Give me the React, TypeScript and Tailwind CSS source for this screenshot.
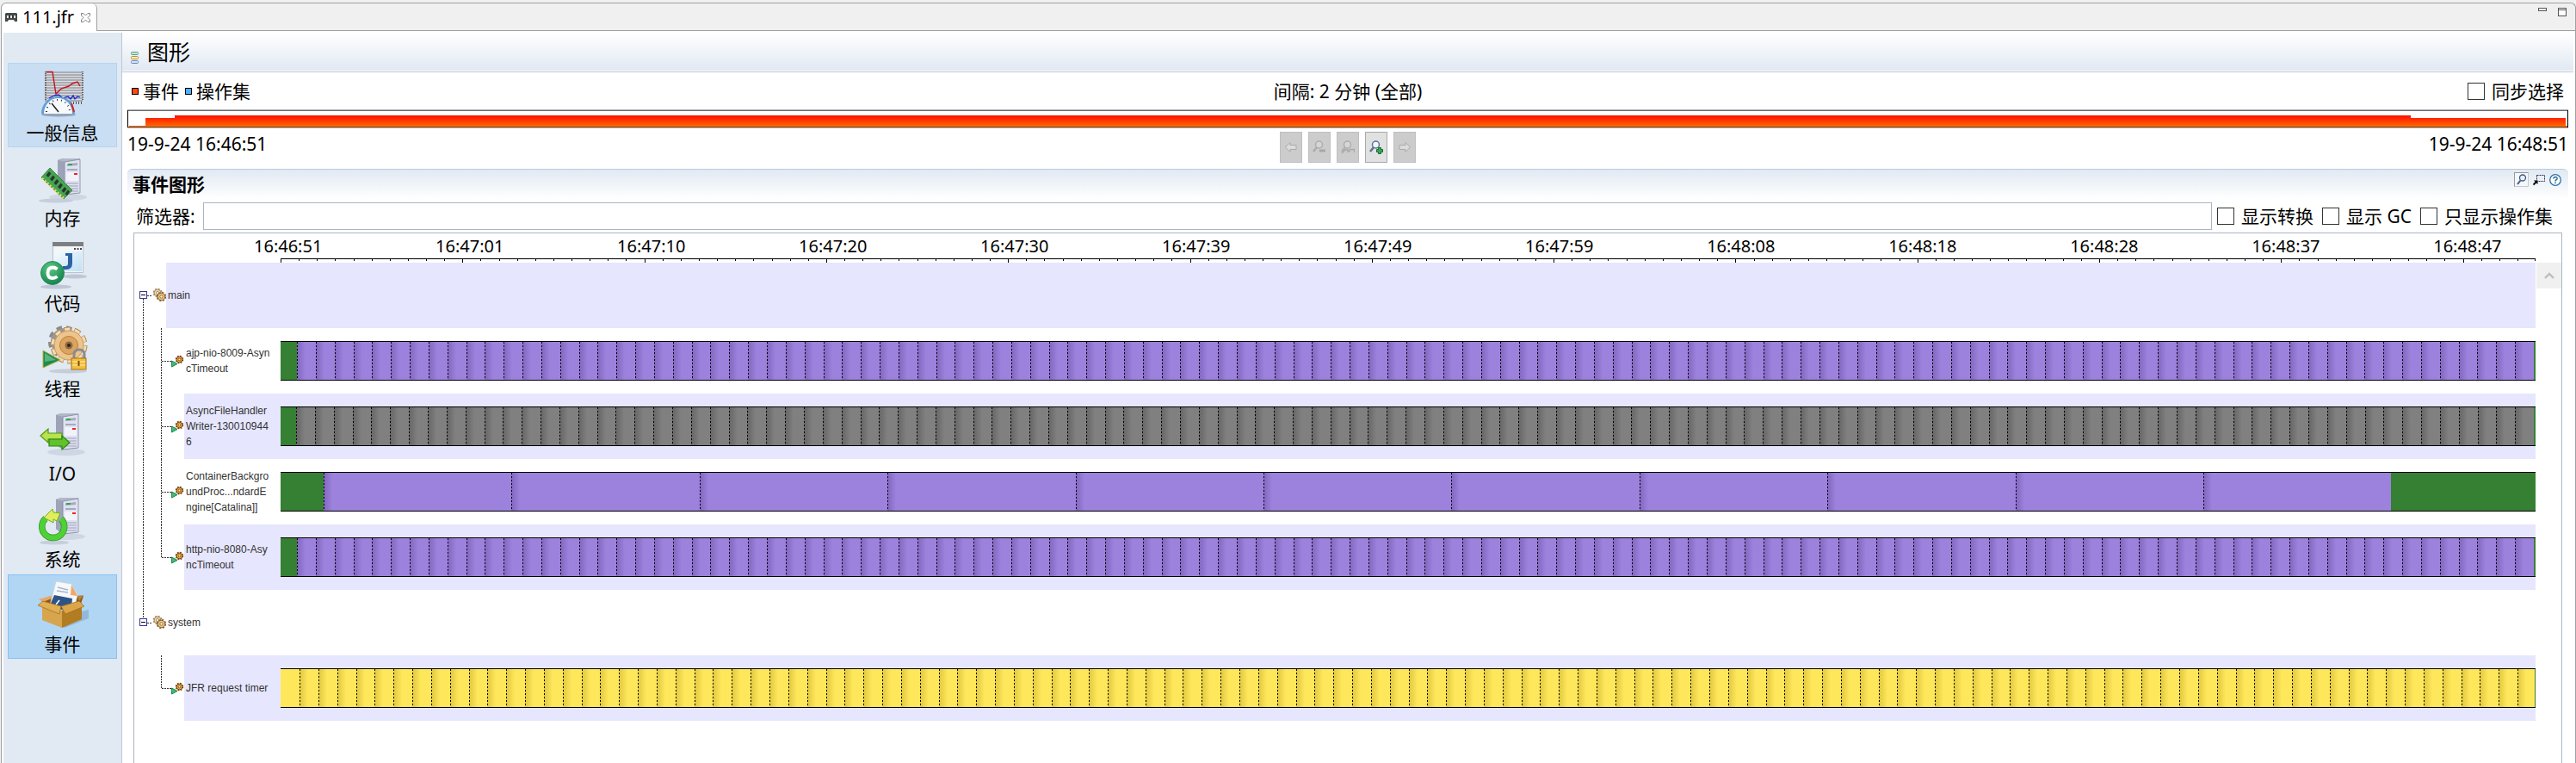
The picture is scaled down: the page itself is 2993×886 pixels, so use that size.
import React from "react";

const TEXT = "font-['Noto_Sans','Noto_Sans_CJK_SC',sans-serif]";

/* ---------- sidebar icons (60 x 60) ---------- */

function Server() {
  return (
    <g>
      <ellipse cx="36" cy="50" rx="22" ry="4" fill="#c3cad8" opacity="0.6" />
      <path d="M24 7 L30 5 H50 V45 L32 47 L24 41 Z" fill="#8b8f9c" />
      <path d="M24 7 L32 9 V47 L24 41 Z" fill="#9fa3b8" />
      <path d="M24 7 L30 5 H50 L49 7 L32 9 Z" fill="#b4b7c9" />
      <path d="M32 9 L50 6 V45 L32 47 Z" fill="#dfe1f0" stroke="#8087a0" strokeWidth="0.8" />
      <path d="M35 11.500 L47 10 V13 L35 14 Z M35 17 H47 V19 H35 Z" fill="#a3aac0" />
      <rect x="36" y="11" width="5" height="2" fill="#2fae3a" />
      <rect x="34" y="21" width="14" height="10" fill="#f1f2fa" />
      <rect x="43" y="22" width="4" height="2" fill="#e22" />
      <path d="M34 34 H48 M34 37 H48 M34 40 H48 M34 43 H48" stroke="#9ba2ba" strokeWidth="1.200" />
    </g>
  );
}

function GeneralIcon() {
  return (
    <svg width="60" height="60" viewBox="0 0 60 60" aria-hidden="true">
      <rect x="9" y="3" width="44" height="34" fill="#dcdee2" />
      <path
        d="M9 4H53 M9 7H53 M9 10H53 M9 13H53 M9 16H53 M9 19H53 M9 22H53 M9 25H53 M9 28H53 M9 31H53 M9 34H53 M9 37H53"
        stroke="#777b84"
        strokeWidth="1.200"
      />
      <path d="M10 3V37 M53 3V37" stroke="#666" strokeWidth="2" strokeDasharray="1 1" />
      <path d="M36 39.500H53" stroke="#555" strokeWidth="3" strokeDasharray="1 2" />
      <path d="M11 3.500H18L21 23L22 29L28 23L37 20L41 17L47 15L50 20" fill="none" stroke="#c4121c" strokeWidth="1.400" />
      <path d="M14 34L20 31L25 30L30 34L36 32L39 35L42 31L44 35L47 32L50 33" fill="none" stroke="#1b22c8" strokeWidth="1.300" />
      <ellipse cx="25" cy="53" rx="20" ry="2.500" fill="#6f7f99" opacity="0.6" />
      <path d="M5 52A19.500 20 0 0 1 44 52Z" fill="#5f9fdd" />
      <path d="M8 52A16.500 18 0 0 1 41 52Z" fill="#f7fafc" />
      <path d="M40 40L43 50" stroke="#d22" strokeWidth="2" />
      <path d="M11 50A13.500 14 0 0 1 38 50" fill="none" stroke="#333" strokeWidth="2" strokeDasharray="1 4" />
      <path d="M17 40L25 50" stroke="#222" strokeWidth="1.500" />
    </svg>
  );
}

function MemoryIcon() {
  return (
    <svg width="60" height="60" viewBox="0 0 60 60" aria-hidden="true">
      <ellipse cx="22" cy="54" rx="20" ry="2.500" fill="#bfc7d6" opacity="0.8" />
      <Server />
      <path d="M15 16L41 42L31 52L5 27Z" fill="#46a552" stroke="#2b7a3c" strokeWidth="0.800" />
      <path d="M6 28L31 51" stroke="#ecdc5c" strokeWidth="2.500" strokeDasharray="2 2" />
      <g fill="#28382e">
        <path d="M14 20L16.500 22.500L13 27L10.500 24.500Z" />
        <path d="M18.500 24.500L21 27L17.500 31.500L15 29Z" />
        <path d="M23 29L25.500 31.500L22 36L19.500 33.500Z" />
        <path d="M27.500 33.500L30 36L26.500 40.500L24 38Z" />
        <path d="M32 38L34.500 40.500L31 45L28.500 42.500Z" />
        <path d="M36 41.500L38 43.500L35 48L32.500 46Z" />
      </g>
    </svg>
  );
}

function CodeIcon() {
  return (
    <svg width="60" height="60" viewBox="0 0 60 60" aria-hidden="true">
      <defs>
        <radialGradient id="codeBall" cx="0.4" cy="0.3" r="0.8">
          <stop offset="0" stopColor="#5cc98a" />
          <stop offset="1" stopColor="#0d7a43" />
        </radialGradient>
        <linearGradient id="codeWin" x1="0" y1="0" x2="1" y2="1">
          <stop offset="0" stopColor="#f4fbff" />
          <stop offset="1" stopColor="#bfe0f5" />
        </linearGradient>
      </defs>
      <ellipse cx="22" cy="55" rx="18" ry="2.500" fill="#bfc7d6" />
      <ellipse cx="44" cy="43" rx="14" ry="2.500" fill="#bfc7d6" />
      <rect x="18" y="3" width="36" height="36" fill="#b9c3cf" />
      <rect x="19" y="7" width="34" height="31" fill="#f4f6f8" />
      <rect x="18" y="3" width="36" height="5" fill="#7d7f82" />
      <path d="M43 11H52" stroke="#445" strokeWidth="2" strokeDasharray="2 1.500" />
      <rect x="20" y="14" width="32" height="23" fill="url(#codeWin)" />
      <path d="M33 16H41V28Q41 35 34 35H30V31H33Q36 31 36 28V19H33Z" fill="#2c63a5" />
      <circle cx="18" cy="39" r="13.500" fill="url(#codeBall)" stroke="#2a8c58" />
      <path d="M23.500 34.500Q21 32.500 18 32.500Q12.500 33 12.500 39Q12.500 45 18 45Q21 45 23.500 43" fill="none" stroke="#fff" strokeWidth="3.800" />
    </svg>
  );
}

function ThreadIcon() {
  return (
    <svg width="60" height="60" viewBox="0 0 60 60" aria-hidden="true">
      <ellipse cx="36" cy="54" rx="22" ry="2.500" fill="#c6ccd8" />
      <circle cx="32" cy="20" r="16" fill="none" stroke="#8c8a88" strokeWidth="6" strokeDasharray="6 5" />
      <circle cx="32" cy="20" r="16" fill="#9a9897" />
      <circle cx="37" cy="24" r="18" fill="none" stroke="#b98a4b" strokeWidth="7" strokeDasharray="7 4.310" />
      <circle cx="37" cy="24" r="18" fill="none" stroke="#f0dcb8" strokeWidth="5" strokeDasharray="6 5.310" strokeDashoffset="-0.500" />
      <circle cx="37" cy="24" r="17" fill="#ecc48c" stroke="#c8965a" />
      <circle cx="37" cy="24" r="10.500" fill="#dba55f" stroke="#b9803c" />
      <circle cx="37" cy="24" r="4.500" fill="#8d6a44" />
      <circle cx="37" cy="24" r="2" fill="#2e2318" />
      <path d="M7 30L27 41L7 50Z" fill="#1f8b4c" stroke="#b7b23d" strokeWidth="1" />
      <path d="M9 33L22 41L9 43Z" fill="#57b57f" />
      <path d="M43 40V35Q43 29 49 29Q55 29 55 35V40" fill="none" stroke="#888c90" strokeWidth="3" />
      <rect x="40" y="39" width="17" height="13" fill="#f3bd3f" stroke="#a97412" />
      <path d="M41 43H56 M41 47H56" stroke="#fbe08a" strokeWidth="1.500" />
      <path d="M48.500 42V48" stroke="#7a5008" strokeWidth="2" />
    </svg>
  );
}

function IoIcon() {
  return (
    <svg width="60" height="60" viewBox="0 0 60 60" aria-hidden="true">
      <g transform="translate(-2 -1)">
        <Server />
      </g>
      <path d="M4 30L13 22V27H29V34H13V38Z" fill="#b9e24c" stroke="#4d9a1b" strokeWidth="1.200" />
      <path d="M38 38L29 30V34H14V42H29V46Z" fill="#61c32b" stroke="#2f8415" strokeWidth="1.200" />
    </svg>
  );
}

function SystemIcon() {
  return (
    <svg width="60" height="60" viewBox="0 0 60 60" aria-hidden="true">
      <ellipse cx="20" cy="55" rx="17" ry="2.500" fill="#bfc7d6" opacity="0.8" />
      <g transform="translate(-2 -2)">
        <Server />
      </g>
      <g transform="translate(-1 3)">
        <path d="M29 24.500A13 13 0 1 1 11 24" fill="none" stroke="#2b9a22" strokeWidth="7.500" />
        <path d="M29 24.500A13 13 0 1 1 11 24" fill="none" stroke="#4fd037" strokeWidth="6" />
        <path d="M9 23L19 13L20 17L28 18L24 27L20 25L20 29Z" fill="#e0ee5c" stroke="#6fae1d" strokeWidth="1" />
      </g>
    </svg>
  );
}

function EventIcon() {
  return (
    <svg width="60" height="60" viewBox="0 0 60 60" aria-hidden="true">
      <path d="M12 46L32 55L60 44V34Z" fill="#7fa3c6" opacity="0.6" />
      <path d="M5 23L22 17L54 18L50 30L30 34L8 29Z" fill="#8a5a1c" />
      <path d="M2 22L19 17L22 19L7 25Z" fill="#e6a765" />
      <path d="M22 1L40 4L47 17L44 30L29 34L15 29Z" fill="#f5f8fc" stroke="#c9d0da" strokeWidth="0.800" />
      <path d="M40 5L47 18L39 17Z" fill="#f2a766" />
      <path d="M24 8L36 11 M23 12L36 14" stroke="#a9b6c8" strokeWidth="1.500" />
      <path d="M20 17L41 21L40 31L29 34L15 29Z" fill="#2d5487" />
      <path d="M22 28L26 23" stroke="#fff" strokeWidth="1.500" />
      <path d="M6 30L29 35V55L6 46Z" fill="#d6a54d" />
      <path d="M29 35L52 29V45L29 55Z" fill="#b27c23" />
      <path d="M1 29L7 24L28 30L26 39Z" fill="#e2ae52" stroke="#a06c1b" strokeWidth="0.700" />
      <path d="M28 30L49 24L55 30L33 39Z" fill="#dca648" stroke="#a06c1b" strokeWidth="0.700" />
      <path d="M49 24L54 17L47 18Z" fill="#b98530" />
    </svg>
  );
}

const NAV = [
  { label: "一般信息", Icon: GeneralIcon, look: "bg-[#c9def2] border-[#b3d5f3]" },
  { label: "内存", Icon: MemoryIcon, look: "border-transparent" },
  { label: "代码", Icon: CodeIcon, look: "border-transparent" },
  { label: "线程", Icon: ThreadIcon, look: "border-transparent" },
  { label: "I/O", Icon: IoIcon, look: "border-transparent" },
  { label: "系统", Icon: SystemIcon, look: "border-transparent" },
  { label: "事件", Icon: EventIcon, look: "bg-[#b1d6f4] border-[#86c1f3]" },
];

/* ---------- small parts ---------- */

function Check({ id, label }: { id: string; label: string }) {
  return (
    <div className="flex items-center gap-2">
      <input
        id={id}
        type="checkbox"
        className="size-5 shrink-0 appearance-none border border-[#333] bg-white checked:bg-[#0078d7]"
      />
      <label htmlFor={id} className="whitespace-nowrap">
        {label}
      </label>
    </div>
  );
}

function Magnifier({ color, lens }: { color: string; lens: string }) {
  return (
    <g>
      <circle cx="7.500" cy="5" r="4" fill={lens} stroke={color} strokeWidth="1.500" />
      <path d="M5 8L1 13" stroke={color} strokeWidth="2.500" />
    </g>
  );
}

const NAV_BUTTONS = [
  {
    name: "后退",
    disabled: true,
    art: <path d="M1.500 8L7 2.500V5.500H14V10.500H7V13.500Z" fill="#dcdcdc" stroke="#aaa" />,
  },
  {
    name: "缩小",
    disabled: true,
    art: (
      <>
        <Magnifier color="#adadad" lens="#d6d6d6" />
        <rect x="8" y="10.500" width="7" height="3" fill="#a8a8a8" />
      </>
    ),
  },
  {
    name: "缩放至选区",
    disabled: true,
    art: (
      <>
        <Magnifier color="#adadad" lens="#d6d6d6" />
        <path d="M1 15L5 11H8V13H10V10.500H15.500V14" fill="none" stroke="#a8a8a8" strokeWidth="1.300" />
      </>
    ),
  },
  {
    name: "放大",
    disabled: false,
    art: (
      <>
        <Magnifier color="#5b7396" lens="#f2f7fd" />
        <path d="M10.500 8.500H13.500V10.500H15.500V13.500H13.500V15.500H10.500V13.500H8.500V10.500H10.500Z" fill="#3aa655" stroke="#156b2c" />
      </>
    ),
  },
  {
    name: "前进",
    disabled: true,
    art: <path d="M14.500 8L9 2.500V5.500H2V10.500H9V13.500Z" fill="#dcdcdc" stroke="#aaa" />,
  },
];

/* ---------- timeline ---------- */

const SPAN = 2620;
const PALETTE = {
  purple: { base: "#9c82dc", dark: "#8166bf" },
  gray: { base: "#808080", dark: "#656565" },
  yellow: { base: "#ffe75c", dark: "#e0c73e" },
};

type Track = {
  tone: keyof typeof PALETTE;
  from: number;
  to: number;
  step: number;
  count: number;
  lead?: boolean;
};

const ASYNC: Track = { tone: "purple", from: 19, to: 2618, step: 21.84, count: 119, lead: true };
const LOGGER: Track = { tone: "gray", from: 18, to: 2618, step: 21.85, count: 119, lead: true };
const CONTAINER: Track = { tone: "purple", from: 50, to: 2452, step: 218.4, count: 11, lead: true };
const JFR: Track = { tone: "yellow", from: 22, to: 2619, step: 21.84, count: 119 };

function Bar({ id, track }: { id: string; track: Track }) {
  const { base, dark } = PALETTE[track.tone];
  const marks = Array.from({ length: track.count }, (_, i) => Math.round(track.from + i * track.step));
  const start = track.lead ? track.from : 0;
  return (
    <svg
      className="h-[46px] w-full"
      viewBox={`0 0 ${SPAN} 46`}
      preserveAspectRatio="none"
      shapeRendering="crispEdges"
      aria-hidden="true"
    >
      <defs>
        <linearGradient id={id}>
          <stop offset="0" stopColor={dark} />
          <stop offset="1" stopColor={base} />
        </linearGradient>
      </defs>
      <rect width={SPAN} height="46" fill="#358033" />
      <rect x={start} width={track.to - start} height="46" fill={base} />
      {marks.map((x) => (
        <g key={x}>
          <rect x={x} width="10" height="46" fill={`url(#${id})`} />
          <path d={`M${x + 0.5} 1V45`} stroke="#000" strokeWidth="1" strokeDasharray="2 2" />
        </g>
      ))}
      <path d={`M0 0.500H${SPAN} M0 45.500H${SPAN}`} stroke="#000" />
    </svg>
  );
}

function Cog({ x, y, r, fill, edge }: { x: number; y: number; r: number; fill: string; edge: string }) {
  return (
    <g>
      <circle cx={x} cy={y} r={r} fill="none" stroke={edge} strokeWidth="2.400" strokeDasharray={`${r * 0.45} ${r * 0.335}`} />
      <circle cx={x} cy={y} r={r - 0.3} fill={fill} stroke={edge} strokeWidth="1" />
      <circle cx={x} cy={y} r={r * 0.38} fill="#fff3cf" stroke={edge} strokeWidth="0.900" />
    </g>
  );
}

function GroupRow({ name, last, shade }: { name: string; last?: boolean; shade: string }) {
  return (
    <div className="flex h-[76px]">
      <button type="button" aria-label={name} className="block w-[37px] shrink-0">
        <svg width="37" height="76" viewBox="0 0 37 76" className="block">
          <path d={last ? "M10.500 0V33" : "M10.500 42V76"} stroke="#333" strokeDasharray="2 1" />
          <path d="M15 38.500H21" stroke="#333" strokeDasharray="2 1" />
          <rect x="6.500" y="33.500" width="8" height="8" fill="#fff" stroke="#35359a" />
          <path d="M8 37.500H13" stroke="#000" />
          <Cog x={27} y={35} r={4.2} fill="#ead9b0" edge="#a88a68" />
          <Cog x={31.500} y={39.500} r={4.5} fill="#eccb7c" edge="#8a5f3a" />
        </svg>
      </button>
      <div className={`flex flex-1 items-center pl-[2px] ${shade}`}>{name}</div>
    </div>
  );
}

function ThreadRow({
  id,
  lines,
  track,
  shade,
  outer,
  last,
}: {
  id: string;
  lines: string[];
  track: Track;
  shade: string;
  outer?: boolean;
  last?: boolean;
}) {
  return (
    <div className="flex h-[76px]">
      <svg width="58" height="76" viewBox="0 0 58 76" className="block shrink-0" aria-hidden="true">
        {outer && <path d="M10.500 0V76" stroke="#333" strokeDasharray="2 1" />}
        <path d={last ? "M31.500 0V38" : "M31.500 0V76"} stroke="#333" strokeDasharray="2 1" />
        <path d="M32 38.500H43" stroke="#333" strokeDasharray="2 1" />
        <path d="M43.500 38L50 41.500L43.500 45Z" fill="#45b878" stroke="#1d8a4c" />
        <Cog x={52.500} y={36.500} r={3.6} fill="#f4b63c" edge="#7a4413" />
      </svg>
      <div className={`flex min-w-0 flex-1 items-center ${shade}`}>
        <div className="w-[112px] shrink-0 pl-[2px]">
          {lines.map((line) => (
            <div key={line} className="whitespace-nowrap">
              {line}
            </div>
          ))}
        </div>
        <div className="flex min-w-0 flex-1">
          <Bar id={id} track={track} />
        </div>
      </div>
    </div>
  );
}

const TIMES = [
  "16:46:51",
  "16:47:01",
  "16:47:10",
  "16:47:20",
  "16:47:30",
  "16:47:39",
  "16:47:49",
  "16:47:59",
  "16:48:08",
  "16:48:18",
  "16:48:28",
  "16:48:37",
  "16:48:47",
];

function Axis() {
  const ticks = Array.from({ length: 125 }, (_, i) => ({
    x: Math.min(Math.round(i * 21.13), SPAN - 1),
    long: i % 10 === 0,
  }));
  return (
    <div className="pr-[30px]">
      <div className="flex h-[29px] overflow-hidden pl-[139px] text-[20px] leading-[30px]">
        {TIMES.map((t) => (
          <div key={t} className="w-[7.96%] shrink-0 whitespace-nowrap">
            {t}
          </div>
        ))}
      </div>
      <div className="pl-[170px]">
        <svg
          className="block h-[5px] w-full"
          viewBox={`0 0 ${SPAN} 5`}
          preserveAspectRatio="none"
          shapeRendering="crispEdges"
          aria-hidden="true"
        >
          <path d={`M0 0.500H${SPAN}`} stroke="#000" />
          {ticks.map((t) => (
            <path key={t.x} d={`M${t.x + 0.5} 0V${t.long ? 5 : 3}`} stroke="#000" />
          ))}
        </svg>
      </div>
    </div>
  );
}

/* ---------- page ---------- */

export default function App() {
  return (
    <div className={`flex min-h-screen flex-col bg-[#f0f0f0] pt-[3px] text-[21px] leading-[28px] text-black ${TEXT}`}>
      <div className="ml-px flex flex-1 flex-col rounded-t-md border-x border-t border-[#a0a0a0]">
        <header className="flex h-[32px] shrink-0">
          <div className="flex w-[111px] items-center rounded-t-md border-r border-[#a0a0a0] bg-white pl-1 text-[20px]">
            <svg width="14" height="10" viewBox="0 0 14 10" aria-hidden="true">
              <path d="M1 0H13L14 1V10H11L10 8H4L3 10H0V1Z" fill="#444b4b" />
              <rect x="2" y="3" width="10" height="3" fill="#e8e8e8" />
              <path d="M4 3H6V6H4Z M8 3H10V6H8Z" fill="#333" />
            </svg>
            <span className="ml-[6px]">111.jfr</span>
            <button type="button" aria-label="关闭" className="ml-2">
              <svg width="11" height="11" viewBox="0 0 11 11" className="block">
                <path
                  d="M0.500 0.500H3L5.500 3L8 0.500H10.500V3L8 5.500L10.500 8V10.500H8L5.500 8L3 10.500H0.500V8L3 5.500L0.500 3Z"
                  fill="#fff"
                  stroke="#777"
                  strokeWidth="0.900"
                />
              </svg>
            </button>
          </div>
          <div className="flex flex-1 items-start justify-end gap-[13px] border-b border-[#a0a0a0] pt-[5px] pr-[10px]">
            <button type="button" aria-label="最小化" className="h-[4px] w-[10px] border border-[#555] bg-white" />
            <button type="button" aria-label="最大化" className="flex h-[10px] w-[10px] items-start border border-[#555] bg-white">
              <span className="block h-[2px] w-full border-b border-[#555]" />
            </button>
          </div>
        </header>

        <div className="flex flex-1 bg-white pt-[2px]">
          <nav className="ml-[2px] flex w-[138px] shrink-0 flex-col gap-px border-r border-[#b9c8dc] bg-[#e1e9f2] px-[5px] pt-[35px]">
            {NAV.map(({ label, Icon, look }) => (
              <button
                key={label}
                type="button"
                className={`flex h-[98px] w-full flex-col items-center border pt-[6px] ${look}`}
              >
                <Icon />
                <span className="leading-[28px]">{label}</span>
              </button>
            ))}
          </nav>

          <main className="flex min-w-0 flex-1 flex-col">
            <div className="mr-[2px] h-[46px] border-b border-[#b9c5db]">
              <div className="flex h-[44px] items-center bg-linear-to-b from-white to-[#e1e9f2] pl-[10px]">
                <svg width="9" height="14" viewBox="0 0 9 14" className="mt-[14px]" aria-hidden="true">
                  <rect x="0.500" y="0.500" width="8" height="3" rx="1" fill="#c5e6cf" stroke="#5b9c80" />
                  <rect x="0.500" y="5.500" width="8" height="3" rx="1" fill="#fbeec0" stroke="#b8902c" />
                  <rect x="0.500" y="10.500" width="8" height="3" rx="1" fill="#d3e2f7" stroke="#6d87b8" />
                </svg>
                <h1 className="ml-[10px] text-[25px] leading-[44px]">图形</h1>
              </div>
            </div>

            <div className="flex flex-1 flex-col pr-2 pl-[6px]">
              <div className="grid h-[43px] grid-cols-3 items-center pt-1 pb-1">
                <div className="flex items-center pl-[5px]">
                  <span className="size-2 border border-black bg-[#ff4a10]" />
                  <span className="ml-[5px]">事件</span>
                  <span className="ml-[7px] size-2 border border-black bg-[#4fb0ff]" />
                  <span className="ml-[5px]">操作集</span>
                </div>
                <div className="text-center">间隔: 2 分钟 (全部)</div>
                <div className="flex justify-end pr-[5px]">
                  <Check id="sync" label="同步选择" />
                </div>
              </div>

              <svg
                className="block h-[22px] w-full"
                viewBox="0 0 2836 22"
                preserveAspectRatio="none"
                shapeRendering="crispEdges"
                aria-hidden="true"
              >
                <defs>
                  <linearGradient id="load" gradientUnits="userSpaceOnUse" x1="0" y1="7" x2="0" y2="21">
                    <stop offset="0" stopColor="#ff0c00" />
                    <stop offset="1" stopColor="#ff7200" />
                  </linearGradient>
                </defs>
                <rect width="2836" height="22" fill="#fff" />
                <path d="M2 21V19H21V10H55V7H2653V10H2833V19H2835V21Z" fill="url(#load)" />
                <path d="M0 0.500H2836 M0 21.500H2836" stroke="#a9afb5" />
                <path d="M0 1.500H2836" stroke="#6b6b6b" />
                <path d="M0 20.500H2836" stroke="#8a4a10" />
                <path d="M0.500 1V21 M2835.500 1V21" stroke="#000" />
              </svg>

              <div className="flex h-[47px] items-start justify-between pt-1">
                <div className="flex-1">19-9-24 16:46:51</div>
                <div className="flex gap-[7px]">
                  {NAV_BUTTONS.map((b) => (
                    <button
                      key={b.name}
                      type="button"
                      aria-label={b.name}
                      disabled={b.disabled}
                      className="flex h-[36px] w-[26px] items-center justify-center border border-[#a9a9a9] bg-[#e1e1e1] disabled:border-[#bfbfbf] disabled:bg-[#cccccc]"
                    >
                      <svg width="16" height="16" viewBox="0 0 16 16">
                        {b.art}
                      </svg>
                    </button>
                  ))}
                </div>
                <div className="flex-1 text-right">19-9-24 16:48:51</div>
              </div>

              <section className="flex flex-1 flex-col">
                <div className="flex h-[35px] items-start justify-between rounded-t-md border-t border-[#b9cbdf] bg-linear-to-b from-[#e1e9f2] to-white pr-2 pl-[6px]">
                  <h2 className="font-bold leading-[34px]">事件图形</h2>
                  <div className="flex items-center gap-[5px] pt-[3px]">
                    <button
                      type="button"
                      aria-label="缩放"
                      className="size-[17px] border border-[#c8c8c8] border-t-[#999] border-l-[#999] bg-[#f6f7f9]"
                    >
                      <svg width="15" height="15" viewBox="0 0 15 15" className="block">
                        <circle cx="9" cy="5.500" r="3.500" fill="#e6effa" stroke="#3c5a86" strokeWidth="1.300" />
                        <path d="M6.500 8.500L3 13" stroke="#3c5a86" strokeWidth="2" />
                      </svg>
                    </button>
                    <button type="button" aria-label="选择">
                      <svg width="14" height="14" viewBox="0 0 14 14" className="block">
                        <rect x="4.500" y="1.500" width="9" height="7" fill="none" stroke="#26345a" strokeDasharray="2 1" />
                        <path d="M0.500 12.500L4 9" stroke="#000" strokeWidth="1.800" />
                        <path d="M1 7.500H5.500V12Z" fill="#000" />
                      </svg>
                    </button>
                    <button type="button" aria-label="帮助">
                      <svg width="14" height="14" viewBox="0 0 14 14" className="block">
                        <circle cx="7" cy="7" r="6.300" fill="#fff" stroke="#2b70a8" strokeWidth="1.300" />
                        <path d="M4.900 5.500Q5 3.500 7 3.500Q9.200 3.600 9.100 5.400Q9 6.400 7.800 7Q7 7.400 7 8.500" fill="none" stroke="#2b70a8" strokeWidth="1.500" />
                        <rect x="6.200" y="9.500" width="1.600" height="1.600" fill="#2b70a8" />
                      </svg>
                    </button>
                  </div>
                </div>

                <div className="mt-1 flex h-[32px] items-center pr-[18px] pl-[10px]">
                  <label htmlFor="filter" className="w-[78px] shrink-0">
                    筛选器:
                  </label>
                  <input id="filter" type="text" className="mr-[6px] h-full min-w-0 flex-1 border border-[#abb5c1] bg-white px-2 outline-none" />
                  <div className="flex shrink-0 gap-[10px]">
                    <Check id="transitions" label="显示转换" />
                    <Check id="gc" label="显示 GC" />
                    <Check id="opsets" label="只显示操作集" />
                  </div>
                </div>

                <div className="mx-[7px] mt-[3px] flex-1 border-x border-t border-[#abb5c1]">
                  <Axis />
                  <div className="flex font-['Liberation_Sans',sans-serif] text-[12px] leading-[18px] text-[#333]">
                    <div className="min-w-0 flex-1">
                      <GroupRow name="main" shade="bg-[#e6e6fe]" />
                      <ThreadRow id="t1" outer lines={["ajp-nio-8009-Asyn", "cTimeout"]} track={ASYNC} shade="bg-white" />
                      <ThreadRow
                        id="t2"
                        outer
                        lines={["AsyncFileHandler", "Writer-130010944", "6"]}
                        track={LOGGER}
                        shade="bg-[#e6e6fe]"
                      />
                      <ThreadRow
                        id="t3"
                        outer
                        lines={["ContainerBackgro", "undProc...ndardE", "ngine[Catalina]]"]}
                        track={CONTAINER}
                        shade="bg-white"
                      />
                      <ThreadRow
                        id="t4"
                        outer
                        last
                        lines={["http-nio-8080-Asy", "ncTimeout"]}
                        track={ASYNC}
                        shade="bg-[#e6e6fe]"
                      />
                      <GroupRow name="system" last shade="bg-white" />
                      <ThreadRow id="t5" last lines={["JFR request timer"]} track={JFR} shade="bg-[#e6e6fe]" />
                    </div>
                    <div className="w-[30px] shrink-0 pl-px">
                      <button type="button" aria-label="向上滚动" className="flex h-[30px] w-full items-center justify-center bg-[#f0f0f0]">
                        <svg width="12" height="8" viewBox="0 0 12 8" className="block">
                          <path d="M1 7L6 2L11 7" fill="none" stroke="#bdbdbd" strokeWidth="2.400" />
                        </svg>
                      </button>
                    </div>
                  </div>
                </div>
              </section>
            </div>
          </main>
        </div>
      </div>
    </div>
  );
}
